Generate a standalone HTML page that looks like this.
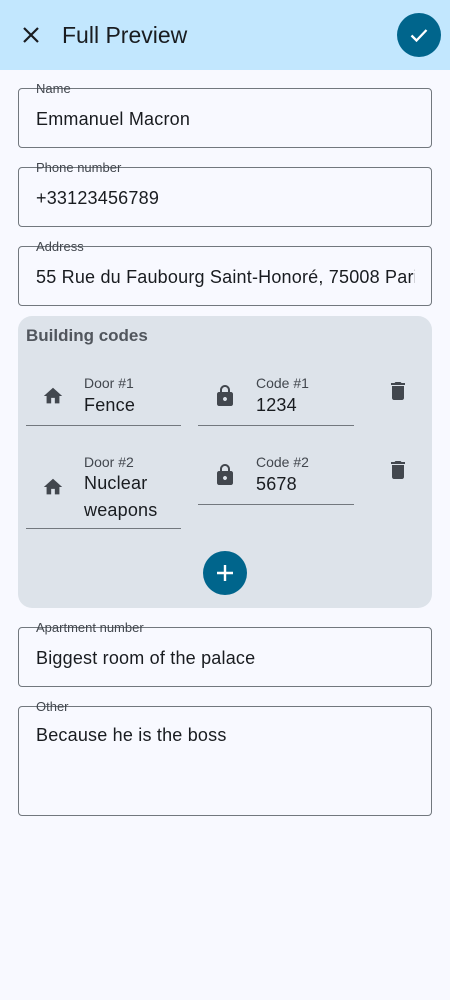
<!DOCTYPE html>
<html><head><meta charset="utf-8"><style>
*{margin:0;padding:0;box-sizing:border-box}
body{width:450px;height:1000px;background:#f8f9ff;font-family:"Liberation Sans",sans-serif;color:#191c20;position:relative;overflow:hidden}
.a{position:absolute;white-space:nowrap}
.box{position:absolute;left:18px;width:414px;border:1.3px solid #72787e;border-radius:4px}
.lbl{position:absolute;left:36px;font-size:13px;color:#42474e;line-height:13px;white-space:nowrap}
.val{position:absolute;left:36px;font-size:18px;letter-spacing:0.2px;line-height:20px;white-space:nowrap}
.s{font-size:14px;color:#42474e;line-height:14px}
.v{font-size:18px;color:#191c20;line-height:20px;letter-spacing:0.2px}
.ul{position:absolute;height:1.3px;background:#72787e}
</style></head><body>
<div class="a" style="left:0;top:0;width:450px;height:70px;background:#c2e7fe"></div>
<svg class="a" style="left:21px;top:25px" width="20" height="20" viewBox="0 0 20 20"><path d="M3 3L17 17M17 3L3 17" stroke="#191c20" stroke-width="2.2"/></svg>
<div class="a" style="left:62px;top:21px;font-size:23px;line-height:28px">Full Preview</div>
<div class="a" style="left:397px;top:13px;width:44px;height:44px;border-radius:50%;background:#00658c"></div>
<svg class="a" style="left:407px;top:23px" width="24" height="24" viewBox="0 0 24 24"><path d="M4.5 12.5L9.5 17.5L19.5 7" stroke="#fff" stroke-width="2.3" fill="none"/></svg>

<div class="box" style="top:88px;height:60px"></div>
<div class="lbl" style="top:82px">Name</div>
<div class="val" style="top:109px">Emmanuel Macron</div>

<div class="box" style="top:167px;height:60px"></div>
<div class="lbl" style="top:161px">Phone number</div>
<div class="val" style="top:188px">+33123456789</div>

<div class="box" style="top:246px;height:60px;overflow:hidden"></div>
<div class="lbl" style="top:240px">Address</div>
<div class="val" style="top:267px;width:379px;overflow:hidden">55 Rue du Faubourg Saint-Honoré, 75008 Paris</div>

<div class="a" style="left:18px;top:316px;width:414px;height:292px;background:#dde3ea;border-radius:14px"></div>
<div class="a" style="left:26px;top:326px;font-size:17px;font-weight:bold;color:#42474e;line-height:20px;opacity:.9">Building codes</div>

<svg class="a" style="left:42px;top:385px" width="22" height="22" viewBox="0 0 24 24"><path d="M10 20v-6h4v6h5v-8h3L12 3 2 12h3v8z" fill="#42474e"/></svg>
<div class="a s" style="left:84px;top:376px">Door #1</div>
<div class="a v" style="left:84px;top:395px">Fence</div>
<div class="ul" style="left:26px;top:425px;width:155px"></div>
<svg class="a" style="left:213px;top:384px" width="24" height="24" viewBox="0 0 24 24"><path d="M18 8h-1V6c0-2.76-2.24-5-5-5S7 3.24 7 6v2H6c-1.1 0-2 .9-2 2v10c0 1.1.9 2 2 2h12c1.1 0 2-.9 2-2V10c0-1.1-.9-2-2-2zm-6 9c-1.1 0-2-.9-2-2s.9-2 2-2 2 .9 2 2-.9 2-2 2zM9 8V6c0-1.66 1.34-3 3-3s3 1.34 3 3v2z" fill="#42474e"/></svg>
<div class="a s" style="left:256px;top:376px">Code #1</div>
<div class="a v" style="left:256px;top:395px">1234</div>
<div class="ul" style="left:198px;top:425px;width:156px"></div>
<svg class="a" style="left:386px;top:379px" width="24" height="24" viewBox="0 0 24 24"><path d="M6 19c0 1.1.9 2 2 2h8c1.1 0 2-.9 2-2V7H6v12zM19 4h-3.5l-1-1h-5l-1 1H5v2h14V4z" fill="#42474e"/></svg>

<svg class="a" style="left:42px;top:476px" width="22" height="22" viewBox="0 0 24 24"><path d="M10 20v-6h4v6h5v-8h3L12 3 2 12h3v8z" fill="#42474e"/></svg>
<div class="a s" style="left:84px;top:455px">Door #2</div>
<div class="a v" style="left:84px;top:473px">Nuclear</div>
<div class="a v" style="left:84px;top:500px">weapons</div>
<div class="ul" style="left:26px;top:528px;width:155px"></div>
<svg class="a" style="left:213px;top:463px" width="24" height="24" viewBox="0 0 24 24"><path d="M18 8h-1V6c0-2.76-2.24-5-5-5S7 3.24 7 6v2H6c-1.1 0-2 .9-2 2v10c0 1.1.9 2 2 2h12c1.1 0 2-.9 2-2V10c0-1.1-.9-2-2-2zm-6 9c-1.1 0-2-.9-2-2s.9-2 2-2 2 .9 2 2-.9 2-2 2zM9 8V6c0-1.660 1.34-3 3-3s3 1.34 3 3v2z" fill="#42474e"/></svg>
<div class="a s" style="left:256px;top:455px">Code #2</div>
<div class="a v" style="left:256px;top:474px">5678</div>
<div class="ul" style="left:198px;top:504px;width:156px"></div>
<svg class="a" style="left:386px;top:458px" width="24" height="24" viewBox="0 0 24 24"><path d="M6 19c0 1.1.9 2 2 2h8c1.1 0 2-.9 2-2V7H6v12zM19 4h-3.5l-1-1h-5l-1 1H5v2h14V4z" fill="#42474e"/></svg>

<div class="a" style="left:203px;top:551px;width:44px;height:44px;border-radius:50%;background:#00658c"></div>
<svg class="a" style="left:215px;top:563px" width="20" height="20" viewBox="0 0 20 20"><path d="M10 2V18M2 10H18" stroke="#fff" stroke-width="2.4"/></svg>

<div class="box" style="top:627px;height:60px"></div>
<div class="lbl" style="top:621px">Apartment number</div>
<div class="val" style="top:648px">Biggest room of the palace</div>

<div class="box" style="top:706px;height:110px"></div>
<div class="lbl" style="top:700px">Other</div>
<div class="val" style="top:725px">Because he is the boss</div>
</body></html>
